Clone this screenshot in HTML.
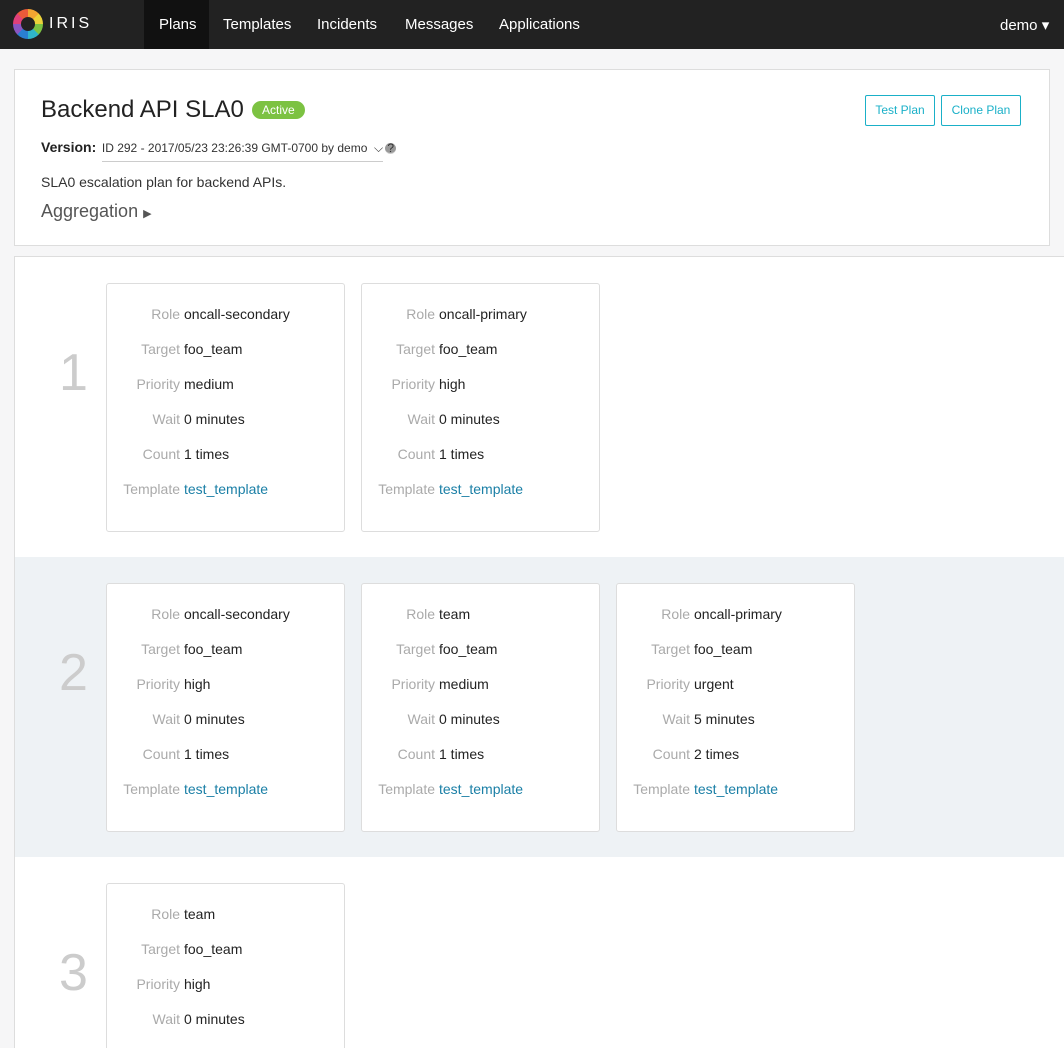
<!DOCTYPE html>
<html style="height:1048px;overflow:hidden"><head><meta charset="utf-8"><style>
*{box-sizing:border-box;margin:0;padding:0}
body{width:1064px;height:1048px;overflow:hidden;position:relative;background:#f6f6f7;font-family:"Liberation Sans",sans-serif;color:#222}
.nav{height:49px;background:#222;position:relative;color:#fff;font-size:15px}
.logo{position:absolute;left:13px;top:9px;width:30px;height:30px;border-radius:50%;background:conic-gradient(#f3a531 0 45deg,#ecd23a 45deg 90deg,#7cc242 90deg 135deg,#2fb5c9 135deg 180deg,#2a7fd0 180deg 225deg,#8a56c2 225deg 270deg,#e0407a 270deg 315deg,#ea5a3a 315deg 360deg)}
.logo:after{content:"";position:absolute;left:8px;top:8px;width:14px;height:14px;border-radius:50%;background:#222}
.brand{position:absolute;left:49px;top:15px;font-size:16px;letter-spacing:3px}
.nav a{position:absolute;top:16px;color:#fff}
.plans{position:absolute;left:144px;top:0;width:65px;height:49px;background:#111}
.panel{position:absolute;left:14px;top:69px;width:1036px;height:177px;background:#fff;border:1px solid #ddd}
h1{position:absolute;left:26px;top:26px;font-size:24px;font-weight:normal;color:#222}
.badge{position:absolute;left:237px;top:31px;background:#7cc242;color:#fff;font-size:12px;border-radius:9px;padding:2px 10px}
.ver{position:absolute;left:26px;top:69px;font-size:13px}
.ver b{font-size:14px}
.ver span{font-size:12px;color:#333;border-bottom:1px solid #ccc;padding-bottom:6px;margin-left:2px}
.q{display:inline-block;width:11px;height:11px;border-radius:50%;background:#999;color:#fff;font-size:9px;text-align:center;line-height:11px;margin-left:4px}
.desc{position:absolute;left:26px;top:104px;font-size:14px;color:#333}
.agg{position:absolute;left:26px;top:131px;font-size:18px;color:#555}
.btn{position:absolute;top:25px;height:31px;border:1px solid #1ab0c8;border-radius:2px;color:#1ab0c8;font-size:12px;line-height:29px;text-align:center;background:#fff}
.steps{position:absolute;left:14px;top:256px;width:1050px;height:792px;overflow:hidden;background:#fff;border-left:1px solid #ddd;border-top:1px solid #ddd}
.step{position:absolute;left:0;width:1050px;height:300px}
.num{position:absolute;left:44px;top:86px;font-size:52px;color:#ccc;font-weight:300}
.card{position:absolute;top:26px;width:239px;height:249px;background:#fff;border:1px solid #ddd;border-radius:3px}
.row{position:absolute;left:0;font-size:14px;white-space:nowrap}
.row i{font-style:normal;color:#aaa;display:inline-block;width:73px;text-align:right;margin-right:4px}
.row a{color:#1a7fa6}
</style></head><body>
<div class="nav"><div class="logo"></div><div class="brand">IRIS</div><div class="plans"></div>
<a style="left:159px">Plans</a><a style="left:223px">Templates</a><a style="left:317px">Incidents</a><a style="left:405px">Messages</a><a style="left:499px">Applications</a><a style="left:1000px">demo ▾</a></div>
<div class="panel"><h1>Backend API SLA0</h1><div class="badge">Active</div>
<div class="ver"><b>Version:</b> <span>ID 292 - 2017/05/23 23:26:39 GMT-0700 by demo &nbsp;⌵</span><span class="q">?</span></div>
<div class="desc">SLA0 escalation plan for backend APIs.</div>
<div class="agg">Aggregation <span style="font-size:11px">▶</span></div>
<div class="btn" style="left:850px;width:70px">Test Plan</div><div class="btn" style="left:926px;width:80px">Clone Plan</div></div>
<div class="steps">
<div class="step" style="top:0"><div class="num">1</div>
<div class="card" style="left:91px"></div><div class="card" style="left:346px"></div></div>
<div class="step" style="top:300px;background:#eef2f5"><div class="num">2</div>
<div class="card" style="left:91px"></div><div class="card" style="left:346px"></div><div class="card" style="left:601px"></div></div>
<div class="step" style="top:600px"><div class="num">3</div><div class="card" style="left:91px"></div></div>
</div>
<script>
const d=[[["oncall-secondary","foo_team","medium","0 minutes","1 times"],["oncall-primary","foo_team","high","0 minutes","1 times"]],
[["oncall-secondary","foo_team","high","0 minutes","1 times"],["team","foo_team","medium","0 minutes","1 times"],["oncall-primary","foo_team","urgent","5 minutes","2 times"]],
[["team","foo_team","high","0 minutes","1 times"]]];
const L=["Role","Target","Priority","Wait","Count","Template"];
document.querySelectorAll('.step').forEach((s,i)=>{s.querySelectorAll('.card').forEach((c,j)=>{let h='';
d[i][j].concat(['<a>test_template</a>']).forEach((v,k)=>{h+=`<div class="row" style="top:${22+k*35}px"><i>${L[k]}</i>${v}</div>`});c.innerHTML=h;})});
</script>
</body></html>
